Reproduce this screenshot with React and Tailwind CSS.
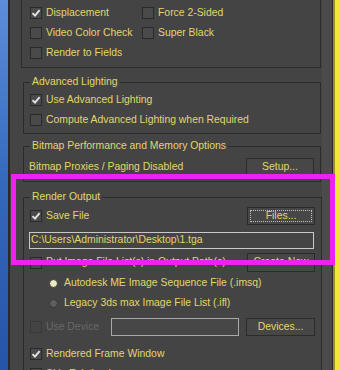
const Y = 'text-[#e0d86a]';

function Check({ checked, disabled }) {
  return (
    <span
      className={`w-[12px] h-[12px] shrink-0 border flex items-center justify-center ${
        disabled ? 'border-[#383838] bg-[#444444]' : 'border-[#2a2a2a] bg-[#4a4a4a]'
      }`}
    >
      {checked && (
        <svg width="10" height="10" viewBox="0 0 10 10">
          <path d="M1.5 5.2 L4 7.7 L8.6 2.2" fill="none" stroke="#e4e4e4" strokeWidth="1.9" />
        </svg>
      )}
    </span>
  );
}

function CheckRow({ label, checked, disabled, className = '' }) {
  return (
    <div className={`flex items-center gap-[4px] h-[20px] ${className}`}>
      <Check checked={checked} disabled={disabled} />
      <span className={`whitespace-nowrap ${disabled ? 'text-[#686868]' : Y}`}>{label}</span>
    </div>
  );
}

function Radio({ label, selected }) {
  return (
    <div className="flex items-center gap-[6px] h-[20px] ml-[19px]">
      <span
        className={`w-[9px] h-[9px] rounded-full border border-[#383838] ${
          selected ? 'bg-[#ebe9c2]' : 'bg-[#5e5e5e]'
        }`}
      />
      <span className={`whitespace-nowrap ${Y}`}>{label}</span>
    </div>
  );
}

function Btn({ children, focused, className = '' }) {
  return (
    <div
      className={`h-[18px] border border-[#2b2b2b] bg-[#474747] flex items-center justify-center p-[2px] ${className}`}
    >
      <div
        className={`w-full h-full flex items-center justify-center ${Y} ${
          focused ? 'border border-dotted border-[#bdbdbd]' : ''
        }`}
      >
        {children}
      </div>
    </div>
  );
}

function Group({ title, className = '', children }) {
  return (
    <fieldset className={`ml-[13px] mr-[1px] border border-[#2c2c2c] px-[6px] ${className}`}>
      <legend className={`px-[2px] leading-[14px] ${Y}`}>{title}</legend>
      {children}
    </fieldset>
  );
}

export default function App() {
  return (
    <div className="relative w-[339px] h-[370px] overflow-hidden flex bg-[#444444] font-['Liberation_Sans',Arial,sans-serif] text-[10.4px] leading-none">
      {/* left window edge */}
      <div className="w-[8px] shrink-0 bg-gradient-to-b from-[#5b8fdb] via-[#3468bb] to-[#2654a6]" />
      <div className="w-[2px] shrink-0 bg-[#2b2b2b]" />

      {/* panel */}
      <div className="w-[312px] shrink-0 flex flex-col bg-[#444444]">
        <div className="ml-[11px] mr-[1px] border-l border-r border-b border-[#2c2c2c] pl-[8px] pt-[3px] pb-[4px]">
          <div className="grid grid-cols-[112px_1fr]">
            <CheckRow label="Displacement" checked />
            <CheckRow label="Force 2-Sided" />
            <CheckRow label="Video Color Check" />
            <CheckRow label="Super Black" />
            <CheckRow label="Render to Fields" />
          </div>
        </div>

        <Group title="Advanced Lighting" className="mt-[7px] pt-[1px] pb-[3px]">
          <CheckRow label="Use Advanced Lighting" checked />
          <CheckRow label="Compute Advanced Lighting when Required" />
        </Group>

        <Group title="Bitmap Performance and Memory Options" className="mt-[5px] pt-[4px] pb-[3px]">
          <div className="flex items-center justify-between h-[21px]">
            <span className={`ml-[-1px] whitespace-nowrap ${Y}`}>Bitmap Proxies / Paging Disabled</span>
            <Btn className="w-[68px] h-[19px]">Setup...</Btn>
          </div>
        </Group>

        <Group title="Render Output" className="mt-[8px]">
          <div className="flex items-center justify-between h-[24px]">
            <CheckRow label="Save File" checked />
            <Btn focused className="w-[68px]">Files...</Btn>
          </div>
          <div className={`mt-[4px] ml-[-1px] w-[285px] h-[17px] border border-[#c9c9c9] flex items-center px-[1px] whitespace-nowrap ${Y}`}>
            C:\Users\Administrator\Desktop\1.tga
          </div>
          <div className="mt-[3px] flex items-center justify-between h-[21px]">
            <CheckRow label="Put Image File List(s) in Output Path(s)" />
            <Btn className="w-[68px] h-[19px]">Create Now</Btn>
          </div>
          <Radio label="Autodesk ME Image Sequence File (.imsq)" selected />
          <Radio label="Legacy 3ds max Image File List (.ifl)" />
          <div className="flex items-center h-[28px]">
            <CheckRow label="Use Device" disabled className="w-[81px]" />
            <div className="w-[128px] h-[18px] border border-[#a9a9a9] bg-[#474747]" />
            <Btn className="ml-[7px] w-[69px]">Devices...</Btn>
          </div>
          <CheckRow label="Rendered Frame Window" checked className="mt-[3px]" />
          <CheckRow label="Skip Existing Images" />
        </Group>
      </div>

      {/* right edge */}
      <div className="w-[10px] shrink-0 bg-[#4b4b4b]" />
      <div className="w-[1px] shrink-0 bg-[#2a2a2a]" />
      <div className="w-[2px] shrink-0 bg-[#9a9322]" />
      <div className="w-[4px] shrink-0 bg-[#f4e634]" />

      {/* annotation highlight */}
      <div className="absolute left-[11px] top-[174px] w-[324px] h-[91px] border-[5px] border-[#ee22ee] pointer-events-none" />
    </div>
  );
}
